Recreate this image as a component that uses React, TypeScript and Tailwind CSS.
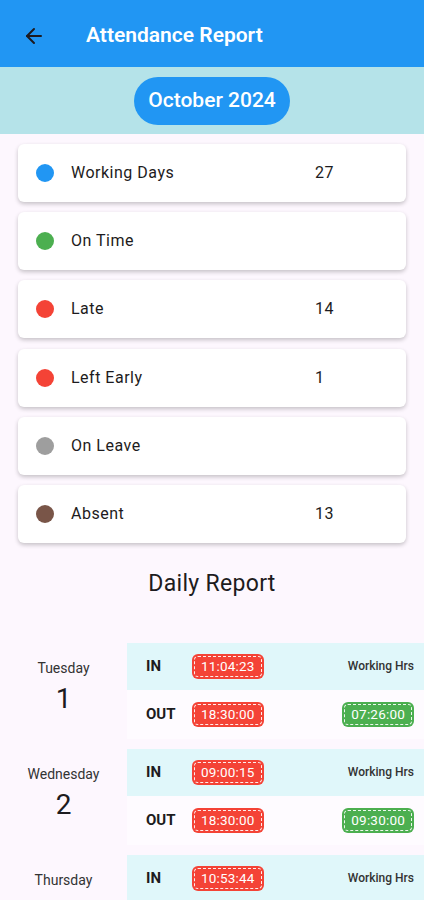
import { ArrowLeft } from "lucide-react";

const SUMMARY = [
  { label: "Working Days", value: "27", dot: "bg-[#2196F3]" },
  { label: "On Time", value: "", dot: "bg-[#4CAF50]" },
  { label: "Late", value: "14", dot: "bg-[#F44336]" },
  { label: "Left Early", value: "1", dot: "bg-[#F44336]" },
  { label: "On Leave", value: "", dot: "bg-[#9E9E9E]" },
  { label: "Absent", value: "13", dot: "bg-[#795548]" },
];

const DAYS = [
  { day: "Tuesday", date: "1", inTime: "11:04:23", outTime: "18:30:00", hrs: "07:26:00" },
  { day: "Wednesday", date: "2", inTime: "09:00:15", outTime: "18:30:00", hrs: "09:30:00" },
  { day: "Thursday", date: "3", inTime: "10:53:44", outTime: "18:30:00", hrs: "07:36:16" },
];

function Badge({ text, green }: { text: string; green?: boolean }) {
  return (
    <div className={`rounded-[6px] p-[2px] ${green ? "bg-[#4CAF50]" : "bg-[#F44336]"}`}>
      <div className="border border-dashed border-white/90 rounded-[4px] h-[21px] px-[6px] flex items-center justify-center text-white text-[13.5px] leading-none tracking-[0.2px]">
        {text}
      </div>
    </div>
  );
}

function DayBlock({ d }: { d: (typeof DAYS)[number] }) {
  return (
    <div className="flex mb-[10px]">
      <div className="w-[127px] flex flex-col items-center pt-[16px]">
        <span className="text-[14px] leading-[18px] text-[#333]">{d.day}</span>
        <span className="mt-[4px] text-[28px] leading-[36px] text-[#1D1B20]">{d.date}</span>
      </div>
      <div className="flex-1">
        <div className="h-[47px] bg-[#E0F7FA] flex items-center pl-[19px] pr-[10px]">
          <span className="w-[46px] text-[15px] font-bold text-[#1D1B20]">IN</span>
          <Badge text={d.inTime} />
          <span className="ml-auto text-[12px] font-medium text-[#333]">Working Hrs</span>
        </div>
        <div className="h-[49px] bg-white/50 flex items-center pl-[19px] pr-[10px]">
          <span className="w-[46px] text-[15px] font-bold text-[#1D1B20]">OUT</span>
          <Badge text={d.outTime} />
          <div className="ml-auto">
            <Badge text={d.hrs} green />
          </div>
        </div>
      </div>
    </div>
  );
}

export default function App() {
  return (
    <div className="w-[424px] h-[900px] overflow-hidden bg-[#FDF7FE] font-['Roboto',sans-serif]">
      <div className="h-[67px] bg-[#2196F3] flex items-center pl-[22px] pt-[4px]">
        <ArrowLeft size={24} strokeWidth={2} className="text-[#1D1B20]" />
        <h1 className="ml-[40px] text-white text-[21px] font-semibold">Attendance Report</h1>
      </div>
      <div className="h-[67px] bg-[#B5E3E9] flex items-center justify-center">
        <div className="h-[48px] w-[156px] rounded-full bg-[#2196F3] flex items-center justify-center text-white text-[21px] font-medium">
          October 2024
        </div>
      </div>
      <div className="px-[18px] pt-[10px] flex flex-col gap-[10.2px]">
        {SUMMARY.map((s) => (
          <div
            key={s.label}
            className="h-[58px] bg-white rounded-[6px] shadow-[0_2px_4px_rgba(0,0,0,0.22)] flex items-center pl-[18px]"
          >
            <div className={`w-[18px] h-[18px] rounded-full ${s.dot}`} />
            <span className="ml-[17px] w-[244px] text-[16px] tracking-[0.5px] text-[#1D1B20]">{s.label}</span>
            <span className="text-[16px] tracking-[0.5px] text-[#1D1B20]">{s.value}</span>
          </div>
        ))}
      </div>
      <h2 className="mt-[27px] h-[28px] leading-[28px] text-center text-[23px] font-normal tracking-[0.3px] text-[#1D1B20]">
        Daily Report
      </h2>
      <div className="mt-[45px]">
        {DAYS.map((d) => (
          <DayBlock key={d.date} d={d} />
        ))}
      </div>
    </div>
  );
}
